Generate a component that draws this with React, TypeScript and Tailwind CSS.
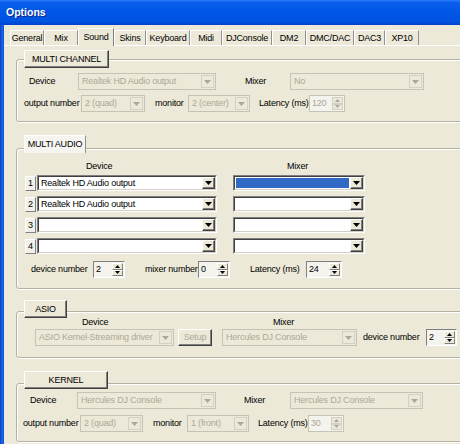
import React from 'react';

const tabs = [
    { name: 'General', w: 'w-[34px]' },
    { name: 'Mix', w: 'w-[34px]' },
    { name: 'Sound', w: 'w-[36px]', active: true },
    { name: 'Skins', w: 'w-[32px]' },
    { name: 'Keyboard', w: 'w-[44px]' },
    { name: 'Midi', w: 'w-[32px]' },
    { name: 'DJConsole', w: 'w-[50px]' },
    { name: 'DM2', w: 'w-[34px]' },
    { name: 'DMC/DAC', w: 'w-[48px]' },
    { name: 'DAC3', w: 'w-[31px]' },
    { name: 'XP10', w: 'w-[34px]' },
];

function Tri({ up, color }: { up?: boolean; color: string }) {
    return (
        <svg width="7" height="4" viewBox="0 0 7 4">
            <polygon points={up ? '3.5,0 7,4 0,4' : '0,0 7,0 3.5,4'} fill={color} />
        </svg>
    );
}

function Combo({
    className,
    text,
    disabled,
    selected,
    h = 'h-[17px]',
}: {
    className: string;
    text?: string;
    disabled?: boolean;
    selected?: boolean;
    h?: string;
}) {
    if (disabled) {
        return (
            <div className={`flex shrink-0 ${h} ${className} border border-[#c6c3b4] bg-[#ece9d8]`}>
                <span className="flex-1 px-[3px] flex items-center whitespace-nowrap overflow-hidden text-[#aca899]">
                    {text}
                </span>
                <div className="m-[1px] w-[13px] border border-[#d3d1c5] flex items-center justify-center">
                    <Tri color="#aca899" />
                </div>
            </div>
        );
    }
    return (
        <div
            className={`flex shrink-0 ${h} ${className} border border-t-[#808080] border-l-[#808080] border-b-white border-r-white`}
        >
            <div className="flex flex-1 border border-t-[#404040] border-l-[#404040] border-b-[#d4d0c8] border-r-[#d4d0c8] bg-white">
                {selected ? (
                    <div className="flex-1 m-[1px] bg-[#316ac5]" />
                ) : (
                    <span className="flex-1 px-[2px] flex items-center whitespace-nowrap overflow-hidden text-black">
                        {text}
                    </span>
                )}
                <div className="w-[13px] bg-[#ece9d8] border border-t-white border-l-white border-b-[#404040] border-r-[#404040] shadow-[inset_-1px_-1px_0_#808080] flex items-center justify-center">
                    <Tri color="#000" />
                </div>
            </div>
        </div>
    );
}

function Spin({ className, value, disabled }: { className: string; value: string; disabled?: boolean }) {
    const border = disabled
        ? 'border border-[#c6c3b4]'
        : 'border border-t-[#808080] border-l-[#808080] border-b-white border-r-white';
    const btn = disabled
        ? 'flex-1 border border-[#d3d1c5] flex items-center justify-center'
        : 'flex-1 border border-t-white border-l-white border-b-[#808080] border-r-[#808080] flex items-center justify-center';
    return (
        <div className={`flex shrink-0 h-[17px] ${className} ${border} bg-[#f4f3ee]`}>
            <span
                className={`flex-1 px-[2px] flex items-center ${disabled ? 'text-[#aca899]' : 'text-black'}`}
            >
                {value}
            </span>
            <div className="w-[11px] flex flex-col m-[1px] bg-[#ece9d8]">
                <div className={btn}>
                    <svg width="5" height="3" viewBox="0 0 5 3">
                        <polygon points="2.5,0 5,3 0,3" fill={disabled ? '#aca899' : '#000'} />
                    </svg>
                </div>
                <div className={btn}>
                    <svg width="5" height="3" viewBox="0 0 5 3">
                        <polygon points="0,0 5,0 2.5,3" fill={disabled ? '#aca899' : '#000'} />
                    </svg>
                </div>
            </div>
        </div>
    );
}

function Raised({ className, children, grey }: { className: string; children: React.ReactNode; grey?: boolean }) {
    return (
        <div
            className={`relative z-10 flex shrink-0 items-center justify-center bg-[#ece9d8] border border-t-white border-l-white border-r-[#404040] border-b-[#404040] shadow-[inset_-1px_-1px_0_#808080] whitespace-nowrap ${grey ? 'text-[#aca899]' : 'text-black'} ${className}`}
        >
            {children}
        </div>
    );
}

function Label({ className, children }: { className: string; children: React.ReactNode }) {
    return <span className={`shrink-0 whitespace-nowrap text-black ${className}`}>{children}</span>;
}

const groupBox =
    'w-[460px] border border-[#b5b2a3] rounded-[3px] shadow-[inset_1px_1px_0_#fff,1px_1px_0_#fff]';

export default function App() {
    return (
        <div className="w-[460px] h-[444px] overflow-hidden bg-[#ece9d8] font-['Liberation_Sans',Arial,sans-serif] text-[9px] tracking-[-0.2px] leading-none select-none">
            {/* title bar */}
            <div className="h-[25px] flex items-center pl-[6px] bg-[linear-gradient(180deg,#2a7cf8_0%,#0a5fec_10%,#0056e6_45%,#0053e1_85%,#0040cc_100%)]">
                <span className="text-white font-bold text-[10.5px] tracking-normal [text-shadow:1px_1px_0_#0a2a8a]">
                    Options
                </span>
            </div>

            <div className="flex">
                <div className="w-[4px] shrink-0 h-[419px] bg-[linear-gradient(90deg,#0842c4,#1b67e8_60%,#0b4fd8)]" />

                <div className="flex-1 min-w-0 pt-[5px]">
                    {/* tabs */}
                    <div className="flex items-end h-[15px] pl-[6px]">
                        {tabs.map((t) =>
                            t.active ? (
                                <div
                                    key={t.name}
                                    className={`${t.w} h-[18px] -mb-[1px] relative z-10 bg-[#ece9d8] border-t border-l border-white border-r border-r-[#808080] flex items-center justify-center text-black`}
                                >
                                    {t.name}
                                </div>
                            ) : (
                                <div
                                    key={t.name}
                                    className={`${t.w} h-[15px] border-t border-l border-white border-r border-r-[#919191] flex items-center justify-center text-black`}
                                >
                                    {t.name}
                                </div>
                            ),
                        )}
                    </div>

                    <div className="border-t border-white pl-[12px]">
                        {/* MULTI CHANNEL */}
                        <Raised className="mt-[4px] ml-[8px] w-[85px] h-[18px]">MULTI CHANNEL</Raised>
                        <div className={`-mt-[9px] pt-[13px] pb-[9px] ${groupBox}`}>
                            <div className="flex items-center h-[17px]">
                                <Label className="ml-[12px] w-[49px]">Device</Label>
                                <Combo className="w-[138px]" text="Realtek HD Audio output" disabled />
                                <Label className="ml-[29px] w-[45px]">Mixer</Label>
                                <Combo className="w-[134px]" text="No" disabled />
                            </div>
                            <div className="flex items-center h-[17px] mt-[5px]">
                                <Label className="ml-[7px] w-[57px]">output number</Label>
                                <Combo className="w-[64px]" text="2 (quad)" disabled />
                                <Label className="ml-[10px] w-[33px]">monitor</Label>
                                <Combo className="w-[62px]" text="2 (center)" disabled />
                                <Label className="ml-[9px] w-[50px]">Latency (ms)</Label>
                                <Spin className="w-[36px]" value="120" disabled />
                            </div>
                        </div>

                        {/* MULTI AUDIO */}
                        <div className="relative z-10 mt-[13px] ml-[8px] w-[62px] h-[18px] bg-[#f5f4ef] border-t border-l border-white border-r border-r-[#919191] flex items-start justify-center pt-[4px] text-black">
                            MULTI AUDIO
                        </div>
                        <div className={`-mt-[5px] pt-[12px] pb-[10px] ${groupBox}`}>
                            <div className="flex items-center h-[11px]">
                                <Label className="ml-[69px] w-[201px]">Device</Label>
                                <Label className="">Mixer</Label>
                            </div>
                            {[
                                { n: '1', dev: 'Realtek HD Audio output', sel: true },
                                { n: '2', dev: 'Realtek HD Audio output' },
                                { n: '3', dev: '' },
                                { n: '4', dev: '' },
                            ].map((r, i) => (
                                <div
                                    key={r.n}
                                    className={`flex items-center h-[16px] ${i === 0 ? 'mt-[3px]' : 'mt-[5px]'}`}
                                >
                                    <div className="ml-[8px] w-[11px] h-[15px] bg-[#f1f0ea] border border-t-white border-l-white border-r-[#808080] border-b-[#808080] flex items-center justify-center text-black">
                                        {r.n}
                                    </div>
                                    <Combo className="ml-[1px] w-[180px]" h="h-[16px]" text={r.dev} />
                                    <Combo className="ml-[16px] w-[132px]" h="h-[16px]" selected={r.sel} />
                                </div>
                            ))}
                            <div className="flex items-center h-[17px] mt-[7px]">
                                <Label className="ml-[14px] w-[62px]">device number</Label>
                                <Spin className="w-[32px]" value="2" />
                                <Label className="ml-[20px] w-[53px]">mixer number</Label>
                                <Spin className="w-[32px]" value="0" />
                                <Label className="ml-[20px] w-[56px]">Latency (ms)</Label>
                                <Spin className="w-[36px]" value="24" />
                            </div>
                        </div>

                        {/* ASIO */}
                        <Raised className="mt-[11px] ml-[8px] w-[43px] h-[18px]">ASIO</Raised>
                        <div className={`-mt-[7px] pt-[5px] pb-[11px] ${groupBox}`}>
                            <div className="flex items-center h-[11px]">
                                <Label className="ml-[65px] w-[191px]">Device</Label>
                                <Label className="">Mixer</Label>
                            </div>
                            <div className="flex items-center h-[17px] mt-[1px]">
                                <Combo className="ml-[18px] w-[139px]" text="ASIO Kernel-Streaming driver" disabled />
                                <Raised className="ml-[4px] w-[34px] h-[17px]" grey>
                                    Setup
                                </Raised>
                                <Combo className="ml-[10px] w-[135px]" text="Hercules DJ Console" disabled />
                                <Label className="ml-[6px] w-[63px]">device number</Label>
                                <Spin className="w-[31px]" value="2" />
                            </div>
                        </div>

                        {/* KERNEL */}
                        <Raised className="mt-[13px] ml-[8px] w-[84px] h-[18px]">KERNEL</Raised>
                        <div className={`-mt-[6px] pt-[8px] pb-[9px] ${groupBox}`}>
                            <div className="flex items-center h-[17px]">
                                <Label className="ml-[13px] w-[47px]">Device</Label>
                                <Combo className="w-[139px]" text="Hercules DJ Console" disabled />
                                <Label className="ml-[28px] w-[46px]">Mixer</Label>
                                <Combo className="w-[133px]" text="Hercules DJ Console" disabled />
                            </div>
                            <div className="flex items-center h-[17px] mt-[6px]">
                                <Label className="ml-[6px] w-[57px]">output number</Label>
                                <Combo className="w-[63px]" text="2 (quad)" disabled />
                                <Label className="ml-[10px] w-[34px]">monitor</Label>
                                <Combo className="w-[62px]" text="1 (front)" disabled />
                                <Label className="ml-[9px] w-[50px]">Latency (ms)</Label>
                                <Spin className="w-[36px]" value="30" disabled />
                            </div>
                        </div>
                    </div>
                </div>
            </div>
        </div>
    );
}
